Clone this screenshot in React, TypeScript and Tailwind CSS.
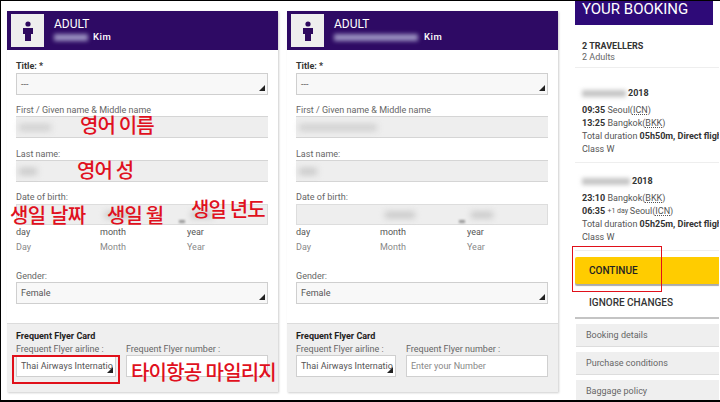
import React from 'react';

const font = { fontFamily: 'Roboto, "Noto Sans CJK KR", sans-serif' };

function Corner() {
  return (
    <svg width="6" height="6" viewBox="0 0 6 6" className="absolute bottom-[3px] right-[2px]">
      <polygon points="6,0 6,6 0,6" fill="#222" />
    </svg>
  );
}

function Select({ value, className = '' }: { value: string; className?: string }) {
  return (
    <div className={`relative h-[22px] border border-[#cfcfcf] bg-[#f8f8f8] pl-1 text-[9px] leading-[20px] text-[#555] overflow-hidden whitespace-nowrap ${className}`}>
      {value}
      <Corner />
    </div>
  );
}

function Label({ children, className = '' }: { children: React.ReactNode; className?: string }) {
  return <div className={`text-[9px] leading-[12px] text-[#666] whitespace-nowrap ${className}`}>{children}</div>;
}

function Person() {
  return (
    <svg width="12" height="20" viewBox="0 0 12 20">
      <circle cx="6" cy="3" r="2.6" fill="#2e0a5e" />
      <path d="M1 7h10v6H9v7H3v-7H1z" fill="#2e0a5e" />
    </svg>
  );
}

function TravellerCard({
  nameWidth,
  first,
  last,
  numberValue,
  kimGap
}: {
  nameWidth: number;
  first: number;
  last: number;
  numberValue: string;
  kimGap: string;
}) {
  return (
    <div className="w-[271px] h-[381px] shrink-0 flex flex-col bg-white shadow-[1px_1px_2px_rgba(0,0,0,0.2)]">
      <div className="h-[39px] bg-[#2e0a64] flex items-center pl-1 gap-[10px] shrink-0">
        <div className="w-[33px] h-[33px] bg-[#eeeeee] flex items-center justify-center">
          <Person />
        </div>
        <div className="text-white">
          <div className="text-[12px] leading-[13px] mb-[1px]">ADULT</div>
          <div className={`flex items-center h-[12px] text-[9.5px] font-medium tracking-[0.5px] ${kimGap}`}>
            <div className="h-[7px] bg-[#9a90c0] blur-[2px]" style={{ width: nameWidth }} />
            <span>Kim</span>
          </div>
        </div>
      </div>
      <div className="flex-1 pl-[9px] pr-[10px] pt-[10px]">
        <div className="text-[9px] leading-[12px] font-bold text-[#333] mb-[1px]">Title: *</div>
        <Select value="---" />
        <Label className="mt-[9px]">First / Given name &amp; Middle name</Label>
        <div className="relative h-[22px] bg-[#eeeeee] border-y border-[#d5d5d5]">
          <div className="absolute left-[3px] top-[7px] h-[7px] bg-[#cfcfcf] blur-[3px]" style={{ width: first }} />
        </div>
        <Label className="mt-[10px]">Last name:</Label>
        <div className="relative h-[22px] bg-[#eeeeee] border-y border-[#d5d5d5]">
          <div className="absolute left-[3px] top-[7px] h-[7px] bg-[#c8c8c8] blur-[3px]" style={{ width: last }} />
        </div>
        <Label className="mt-[9px] mb-[1px]">Date of birth:</Label>
        <div className="relative h-[21px] bg-[#eeeeee] border border-[#dddddd]">
          <div className="absolute left-[88px] top-[7px] w-[30px] h-[6px] bg-[#c4c4c4] blur-[3px]" />
          <div className="absolute left-[174px] top-[7px] w-[22px] h-[6px] bg-[#c4c4c4] blur-[3px]" />
          <div className="absolute left-[162px] bottom-[1px] w-[6px] h-[3px] bg-[#9a9a9a] blur-[1px]" />
        </div>
        <div className="grid grid-cols-[84px_87px_1fr] text-[9px] leading-[14px] text-[#555]">
          <span>day</span>
          <span>month</span>
          <span>year</span>
        </div>
        <div className="grid grid-cols-[84px_87px_1fr] mt-[1px] text-[9px] leading-[14px] text-[#888]">
          <span>Day</span>
          <span>Month</span>
          <span>Year</span>
        </div>
        <Label className="mt-[16px]">Gender:</Label>
        <Select value="Female" />
      </div>
      <div className="h-[69px] bg-[#efefef] border-t border-[#dcdcdc] pl-[9px] pr-[10px] pt-[6px] shrink-0">
        <div className="text-[9px] leading-[12px] font-bold text-[#222]">Frequent Flyer Card</div>
        <div className="flex gap-[10px] mt-[1px]">
          <div className="w-[100px]">
            <Label>Frequent Flyer airline :</Label>
            <Select value="Thai Airways Internatio" className="bg-white" />
          </div>
          <div className="flex-1">
            <Label>Frequent Flyer number :</Label>
            <div className="h-[22px] border border-[#d0d0d0] bg-white pl-1 text-[9px] leading-[20px] text-[#888]">{numberValue}</div>
          </div>
        </div>
      </div>
    </div>
  );
}

function Stop({ time, city, code, note }: { time: string; city: string; code: string; note?: boolean }) {
  return (
    <div>
      <b className="text-[#333]">{time}</b>{' '}
      {note && <span className="text-[7px] align-top">+1 day </span>}
      {city}(<span className="underline decoration-dotted">{code}</span>)
    </div>
  );
}

function Flight({ smudge, children, duration }: { smudge: number; children: React.ReactNode; duration: string }) {
  return (
    <div className="pl-[7px] text-[9px] leading-[13px] text-[#555] whitespace-nowrap">
      <div className="flex items-center gap-[2px] font-bold text-[#333] mb-[4px]">
        <div className="h-[7px] bg-[#c5c5c5] blur-[2px]" style={{ width: smudge }} />
        2018
      </div>
      {children}
      <div>Total duration <b className="text-[#333]">{duration}, Direct fligh</b></div>
      <div>Class W</div>
    </div>
  );
}

function Sidebar() {
  return (
    <div className="w-[144px] shrink-0 ml-[8px] -mt-[11px] flex flex-col overflow-hidden">
      <div className="w-[138px] h-[25px] bg-[#2e0a78] text-white text-[15px] leading-[19px] pl-[7px] shrink-0">YOUR BOOKING</div>
      <div className="pl-[7px] mt-[15px] text-[9px] leading-[12px] font-bold text-[#333]">2 TRAVELLERS</div>
      <div className="pl-[7px] text-[9px] leading-[11px] text-[#666]">2 Adults</div>
      <div className="border-t border-[#eeeeee] mt-[4px] mb-[19px]" />
      <Flight smudge={44} duration="05h50m">
        <Stop time="09:35" city="Seoul" code="ICN" />
        <Stop time="13:25" city="Bangkok" code="BKK" />
      </Flight>
      <div className="border-t border-[#eeeeee] mt-[6px] mb-[12px]" />
      <Flight smudge={48} duration="05h25m">
        <Stop time="23:10" city="Bangkok" code="BKK" />
        <Stop time="06:35" city="Seoul" code="ICN" note />
      </Flight>
      <div className="border-t border-[#eeeeee] mt-[6px]" />
      <div className="mt-[6px] h-[27px] bg-[#ffcc00] rounded-l-[2px] shadow-[0_2px_1px_#aaa] pl-[14px] text-[10px] leading-[27px] font-medium text-[#222] shrink-0">CONTINUE</div>
      <div className="mt-[2px] h-[33px] border-b-2 border-[#c4c4c4] pl-[14px] text-[10px] leading-[33px] font-medium text-[#333] shrink-0">IGNORE CHANGES</div>
      {['Booking details', 'Purchase conditions', 'Baggage policy'].map(item => (
        <div key={item} className="mt-[5px] ml-[1px] h-[23px] bg-[#efefef] border-b border-[#dddddd] pl-[10px] text-[9px] leading-[22px] text-[#666] shrink-0">
          {item}
        </div>
      ))}
    </div>
  );
}

export default function App() {
  return (
    <div style={font} className="relative w-[720px] h-[402px] overflow-hidden bg-white border-t border-l border-b-2 border-black">
      <div className="flex pl-[6px] pt-[10px] gap-[9px] items-start">
        <TravellerCard nameWidth={34} first={32} last={18} numberValue="" kimGap="gap-[5px]" />
        <TravellerCard nameWidth={84} first={78} last={18} numberValue="Enter your Number" kimGap="gap-[6px]" />
        <Sidebar />
      </div>
      {/* hand-written red notes on top of the screenshot */}
      <div className="absolute left-[79px] top-[113px] text-[20px] leading-[24px] tracking-[-1px] text-[#e01020] font-medium">영어 이름</div>
      <div className="absolute left-[76px] top-[158px] text-[20px] leading-[24px] tracking-[-1px] text-[#e01020] font-medium">영어 성</div>
      <div className="absolute left-[9px] top-[203px] text-[20px] leading-[24px] tracking-[-0.6px] text-[#e01020] font-medium">생일 날짜</div>
      <div className="absolute left-[106px] top-[203px] text-[20px] leading-[24px] tracking-[-1px] text-[#e01020] font-medium">생일 월</div>
      <div className="absolute left-[190px] top-[197px] text-[20px] leading-[24px] tracking-[-1px] text-[#e01020] font-medium">생일 년도</div>
      <div className="absolute left-[130px] top-[360px] text-[20px] leading-[24px] tracking-[-0.8px] text-[#e01020] font-medium">타이항공 마일리지</div>
      <div className="absolute left-[11px] top-[354px] w-[108px] h-[29px] border-2 border-[#e0101a]" />
      <div className="absolute left-[571px] top-[245px] w-[90px] h-[46px] border border-[#e0101a]" />
    </div>
  );
}
